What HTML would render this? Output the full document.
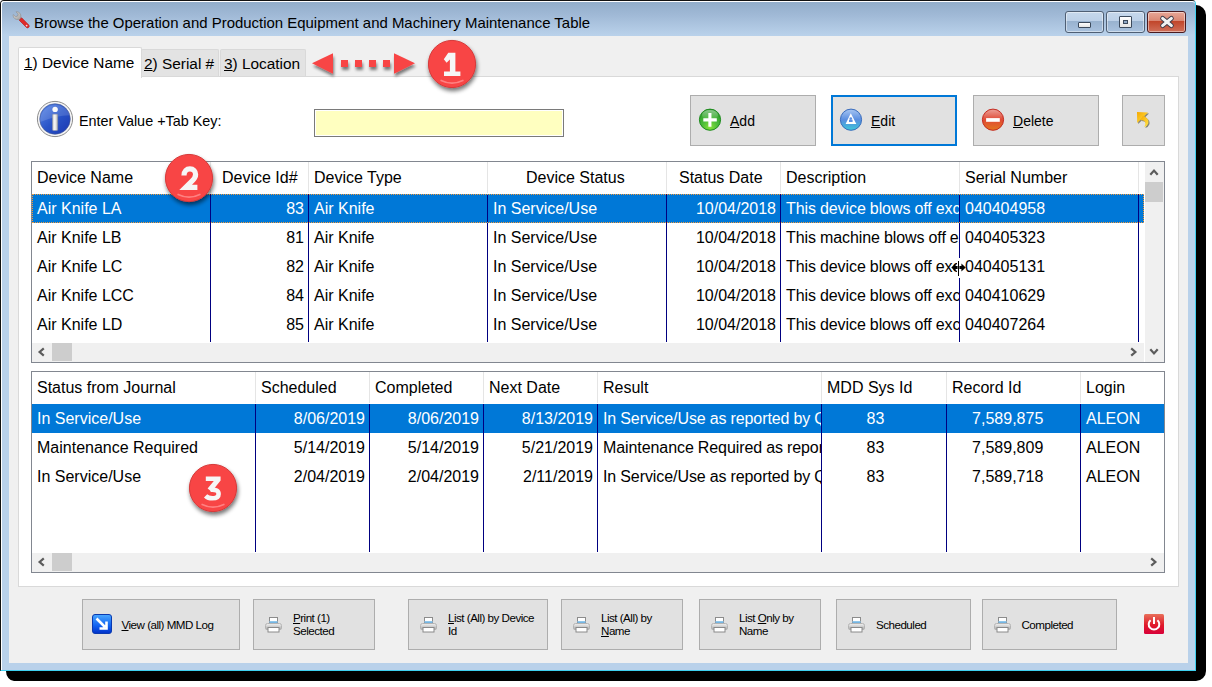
<!DOCTYPE html>
<html><head><meta charset="utf-8">
<style>
*{margin:0;padding:0;box-sizing:border-box}
html,body{width:1212px;height:687px;overflow:hidden;background:#fff;font-family:"Liberation Sans",sans-serif;color:#000}
.a{position:absolute}
.t{position:absolute;white-space:nowrap;line-height:1}
#shadowR{left:1190px;top:4px;width:16px;height:677px;background:#000;clip-path:polygon(0 0,6px 0,16px 10px,16px calc(100% - 10px),calc(100% - 10px) 100%,0 100%)}
#shadowB{left:6px;top:660px;width:1200px;height:21px;background:#000;clip-path:polygon(0 0,100% 0,100% calc(100% - 10px),calc(100% - 10px) 100%,8px 100%,0 calc(100% - 8px))}
#win{left:0;top:0;width:1196px;height:671px;background:linear-gradient(#93aecb 2px,#a0b9d6 14px,#b9d1ea 34px,#b9d1ea 100%);border-top:1px solid #111;border-left:1px solid #111;border-right:1px solid #3fd0f0;border-bottom:1px solid #3fd0f0;border-radius:4px 4px 0 0}
#winin{left:1px;top:1px;width:1194px;height:669px;border-top:1px solid #fff;border-left:1px solid #fff;border-radius:3px 3px 0 0}
.tb{height:22px;top:11px;border:1px solid #4f5f74;border-radius:3px;background:linear-gradient(#c6d8ec 0,#bcd0e7 45%,#98b2cf 46%,#a9c2de 100%);box-shadow:inset 0 0 0 1px rgba(255,255,255,.45)}
#bclose{background:linear-gradient(#e8a797 0,#d98672 45%,#c1452a 46%,#d0705a 100%);border-color:#4a1a1f}
#client{left:9px;top:36px;width:1179px;height:627px;background:#f0f0f0}
.tab{position:absolute;background:#e3e3e3;border:1px solid #d9d9d9;border-bottom:none;border-radius:2px 2px 0 0}
#panel{left:18px;top:76px;width:1161px;height:511px;background:#fff;border:1px solid #d9d9d9}
.btn{position:absolute;background:#e1e1e1;border:1px solid #adadad}
.grid{position:absolute;background:#fff;border:1px solid #828790}
.cell{position:absolute;overflow:hidden;white-space:nowrap;font-size:16px;line-height:29px;height:29px}
.hdr{position:absolute;overflow:hidden;white-space:nowrap;font-size:16px;line-height:32px;height:32px}
.vl{position:absolute;width:1px;background:#000080}
.hl{position:absolute;width:1px;background:#e5e5e5}
.sb{position:absolute;background:#f0f0f0}
.bb{position:absolute;background:#e1e1e1;border:1px solid #adadad;font-size:10.6px;line-height:13px}
.u{text-decoration:underline;text-underline-offset:1px}
</style></head><body>
<svg class="a" style="left:0;top:0" width="1212" height="687"><path d="M1180 5 H1196 A10 10 0 0 1 1206 15 V671 A10 10 0 0 1 1196 681 H14 A8 10 0 0 1 6 671 V650 H1180z" fill="#000"/></svg>
<div id="win" class="a"></div><div id="winin" class="a"></div>
<svg class="a" style="left:10px;top:11px" width="22" height="20" viewBox="0 0 22 20">
<defs><linearGradient id="wh" x1="0" y1="0" x2="1" y2="1"><stop offset="0" stop-color="#e0e0e0"/><stop offset="1" stop-color="#9a9a9a"/></linearGradient></defs>
<path d="M3.2 3.6 a4.2 4.2 0 0 0 5.6 4.6 l1.2 1.2 1.8-1.8 -1.2-1.2 a4.2 4.2 0 0 0 -4.6-5.6 l2.2 2.2 -0.6 2 -2 0.6z" fill="url(#wh)" stroke="#8a8a8a" stroke-width=".6"/>
<path d="M9.2 9.2 l2.4-2.4 7.2 7.2 a1.7 1.7 0 0 1 -2.4 2.4z" fill="#e02a2a" stroke="#b01818" stroke-width=".6"/>
<circle cx="16.6" cy="14.6" r=".9" fill="#fff" opacity=".8"/>
</svg>
<div class="t" style="left:34px;top:16px;font-size:14.95px">Browse the Operation and Production Equipment and Machinery Maintenance Table</div>
<div class="a tb" style="left:1065px;width:39px"></div>
<div class="a tb" style="left:1106px;width:39px"></div>
<div id="bclose" class="a tb" style="left:1147px;width:39px"></div>
<div class="a" style="left:1078px;top:22px;width:13px;height:6px;background:linear-gradient(#fff,#e4e4e4);border:1px solid #3c4a5c;border-radius:1px"></div>
<div class="a" style="left:1119px;top:16px;width:13px;height:12px;background:linear-gradient(#fff,#e4e4e4);border:1px solid #3c4a5c;border-radius:1px"><div class="a" style="left:3px;top:3px;width:5px;height:4px;background:#8fa8c6;border:1px solid #3c4a5c"></div></div>
<svg class="a" style="left:1158px;top:14px" width="18" height="16" viewBox="0 0 18 16">
<path d="M4.6 4.4 L13.4 11.6 M13.4 4.4 L4.6 11.6" stroke="#3a3a48" stroke-width="4.8" stroke-linecap="round"/>
<path d="M4.6 4.4 L13.4 11.6 M13.4 4.4 L4.6 11.6" stroke="#f2f2f2" stroke-width="3" stroke-linecap="round"/>
</svg>
<div id="client" class="a"></div>
<div class="tab" style="left:141px;top:49px;width:78px;height:28px"></div>
<div class="tab" style="left:220px;top:49px;width:86px;height:28px"></div>
<div id="panel" class="a"></div>
<div class="tab" style="left:18px;top:47px;width:124px;height:31px;background:#fff"></div>
<div class="t" style="left:24px;top:55px;font-size:15.4px"><span class="u">1</span>) Device Name</div>
<div class="t" style="left:144px;top:56px;font-size:15.4px"><span class="u">2</span>) Serial #</div>
<div class="t" style="left:224px;top:56px;font-size:15.4px"><span class="u">3</span>) Location</div>
<svg class="a" style="left:36px;top:100px" width="38" height="38" viewBox="0 0 38 38">
<defs>
<linearGradient id="ib" x1="0" y1="0" x2="1" y2="1"><stop offset="0" stop-color="#5a88e8"/><stop offset=".5" stop-color="#2a55c8"/><stop offset="1" stop-color="#1a36b0"/></linearGradient>
<linearGradient id="ii" x1="0" y1="0" x2="1" y2="0"><stop offset="0" stop-color="#c8c8c8"/><stop offset=".45" stop-color="#fafafa"/><stop offset="1" stop-color="#b0b0b0"/></linearGradient>
</defs>
<circle cx="19" cy="19" r="17.6" fill="#f6f6f6" stroke="#8c8c8c" stroke-width="1"/>
<circle cx="19" cy="19" r="15.3" fill="url(#ib)" stroke="#4a5a90" stroke-width=".6"/>
<path d="M4.2 22 A15.3 15.3 0 0 1 33.8 15.2 Q20 15.5 4.2 22z" fill="#fff" opacity=".14"/>
<circle cx="19.1" cy="9.4" r="2.7" fill="#fafafa"/>
<rect x="16.5" y="14.2" width="5.2" height="16.3" rx=".8" fill="url(#ii)" stroke="#9a9a9a" stroke-width=".4"/>
</svg>
<div class="t" style="left:79px;top:114px;font-size:14.4px">Enter Value +Tab Key:</div>
<div class="a" style="left:314px;top:109px;width:250px;height:28px;border:1px solid #7a7a7a;background:#ffffc0;box-shadow:inset 0 0 0 1px #fff"></div>
<div class="btn" style="left:690px;top:95px;width:126px;height:51px"></div>
<div class="btn" style="left:831px;top:95px;width:126px;height:51px;border:2px solid #0078d7"></div>
<div class="btn" style="left:973px;top:95px;width:126px;height:51px"></div>
<div class="btn" style="left:1122px;top:95px;width:43px;height:51px"></div>
<div class="t" style="left:730px;top:113.5px;font-size:14px"><span class="u">A</span>dd</div>
<div class="t" style="left:871px;top:113.5px;font-size:14px"><span class="u">E</span>dit</div>
<div class="t" style="left:1013px;top:113.5px;font-size:14px"><span class="u">D</span>elete</div>
<svg class="a" style="left:698px;top:108px" width="24" height="24" viewBox="0 0 24 24">
<defs><radialGradient id="ga" cx=".5" cy=".85" r=".8"><stop offset="0" stop-color="#86e23a"/><stop offset=".45" stop-color="#4cbc3a"/><stop offset="1" stop-color="#2a9a2a"/></radialGradient>
<linearGradient id="gah" x1="0" y1="0" x2="0" y2="1"><stop offset="0" stop-color="#fff" stop-opacity=".45"/><stop offset="1" stop-color="#fff" stop-opacity="0"/></linearGradient></defs>
<circle cx="12" cy="11.7" r="10.6" fill="url(#ga)" stroke="#1f8c1f" stroke-width="1"/>
<ellipse cx="12" cy="7" rx="8" ry="5" fill="url(#gah)"/>
<path d="M11.9 5 V18.8 M5.3 11.85 H18.8" stroke="#fff" stroke-width="3.1"/>
</svg>
<svg class="a" style="left:839px;top:108px" width="24" height="24" viewBox="0 0 24 24">
<defs><linearGradient id="ge" x1="0" y1="0" x2="0" y2="1"><stop offset="0" stop-color="#a8c6f2"/><stop offset=".5" stop-color="#5a8ee0"/><stop offset=".75" stop-color="#48a8dc"/><stop offset="1" stop-color="#40c8d8"/></linearGradient></defs>
<circle cx="12" cy="11.7" r="10.6" fill="url(#ge)" stroke="#3a6cbc" stroke-width="1"/>
<path d="M11.8 5.3 L17.3 16 H6.6z" fill="#fff"/>
<circle cx="11.8" cy="10.6" r="1.3" fill="#5a8ee0"/><rect x="10" y="11.6" width="3.6" height="2.4" fill="#5a8ee0"/>
</svg>
<svg class="a" style="left:981px;top:108px" width="24" height="24" viewBox="0 0 24 24">
<defs><linearGradient id="gd" x1="0" y1="0" x2="0" y2="1"><stop offset="0" stop-color="#eba098"/><stop offset=".5" stop-color="#e04a36"/><stop offset="1" stop-color="#e2761e"/></linearGradient></defs>
<circle cx="12" cy="11.7" r="10.6" fill="url(#gd)" stroke="#c42c22" stroke-width="1"/>
<rect x="5.1" y="10.1" width="13.7" height="3.7" fill="#fff"/>
</svg>
<svg class="a" style="left:1135px;top:110px" width="16" height="20" viewBox="0 0 16 20">
<defs><linearGradient id="yar" x1="0" y1="0" x2="1" y2="1"><stop offset="0" stop-color="#f6a800"/><stop offset="1" stop-color="#ffe64a"/></linearGradient></defs>
<g transform="translate(1,1)" fill="#3a3a20" opacity=".55"><path d="M2 2 L13 2.6 L2.2 13z"/><path d="M8 5.5 Q14.8 8.8 13.3 13.6 Q12.4 16.3 9.3 17 Q11.2 13.8 10 11.8 Q9 10.2 5.5 10z"/></g>
<g fill="url(#yar)"><path d="M2 2 L13 2.6 L2.2 13z"/><path d="M8 5.5 Q14.8 8.8 13.3 13.6 Q12.4 16.3 9.3 17 Q11.2 13.8 10 11.8 Q9 10.2 5.5 10z"/></g>
</svg>
<div class="grid" style="left:31px;top:161px;width:1134px;height:202px"></div>
<div class="hl" style="left:210px;top:162px;height:31px"></div>
<div class="hl" style="left:308px;top:162px;height:31px"></div>
<div class="hl" style="left:487px;top:162px;height:31px"></div>
<div class="hl" style="left:666px;top:162px;height:31px"></div>
<div class="hl" style="left:780px;top:162px;height:31px"></div>
<div class="hl" style="left:959px;top:162px;height:31px"></div>
<div class="hl" style="left:1138px;top:162px;height:31px"></div>
<div class="t" style="left:37px;top:170px;font-size:16px">Device Name</div>
<div class="t" style="left:222px;top:170px;font-size:16px">Device Id#</div>
<div class="t" style="left:314px;top:170px;font-size:16px">Device Type</div>
<div class="t" style="left:526px;top:170px;font-size:16px">Device Status</div>
<div class="t" style="left:679px;top:170px;font-size:16px">Status Date</div>
<div class="t" style="left:786px;top:170px;font-size:16px">Description</div>
<div class="t" style="left:965px;top:170px;font-size:16px">Serial Number</div>
<div class="a" style="left:32px;top:194px;width:1112px;height:148px;overflow:hidden">
<div class="a" style="left:0;top:0;width:1112px;height:29px;background:#0078d7"></div>
<div class="vl" style="left:178px;top:0;height:148px"></div>
<div class="vl" style="left:276px;top:0;height:148px"></div>
<div class="vl" style="left:455px;top:0;height:148px"></div>
<div class="vl" style="left:634px;top:0;height:148px"></div>
<div class="vl" style="left:748px;top:0;height:148px"></div>
<div class="vl" style="left:927px;top:0;height:148px"></div>
<div class="vl" style="left:1106px;top:0;height:148px"></div>
<div class="vl" style="left:1106px;top:0;height:148px"></div>
<div class="cell" style="left:0px;top:0px;width:178px;padding-left:5px;color:#fff">Air Knife LA</div>
<div class="cell" style="left:179px;top:0px;width:97px;padding-right:4px;text-align:right;color:#fff">83</div>
<div class="cell" style="left:277px;top:0px;width:178px;padding-left:5px;color:#fff">Air Knife</div>
<div class="cell" style="left:456px;top:0px;width:178px;padding-left:5px;color:#fff">In Service/Use</div>
<div class="cell" style="left:635px;top:0px;width:113px;padding-right:4px;text-align:right;color:#fff">10/04/2018</div>
<div class="cell" style="left:749px;top:0px;width:178px;padding-left:5px;letter-spacing:-0.08px;word-spacing:-0.3px;color:#fff">This device blows off excess</div>
<div class="cell" style="left:928px;top:0px;width:178px;padding-left:5px;color:#fff">040404958</div>
<div class="cell" style="left:0px;top:29px;width:178px;padding-left:5px;color:#000">Air Knife LB</div>
<div class="cell" style="left:179px;top:29px;width:97px;padding-right:4px;text-align:right;color:#000">81</div>
<div class="cell" style="left:277px;top:29px;width:178px;padding-left:5px;color:#000">Air Knife</div>
<div class="cell" style="left:456px;top:29px;width:178px;padding-left:5px;color:#000">In Service/Use</div>
<div class="cell" style="left:635px;top:29px;width:113px;padding-right:4px;text-align:right;color:#000">10/04/2018</div>
<div class="cell" style="left:749px;top:29px;width:178px;padding-left:5px;letter-spacing:-0.08px;word-spacing:-0.3px;color:#000">This machine blows off excess</div>
<div class="cell" style="left:928px;top:29px;width:178px;padding-left:5px;color:#000">040405323</div>
<div class="cell" style="left:0px;top:58px;width:178px;padding-left:5px;color:#000">Air Knife LC</div>
<div class="cell" style="left:179px;top:58px;width:97px;padding-right:4px;text-align:right;color:#000">82</div>
<div class="cell" style="left:277px;top:58px;width:178px;padding-left:5px;color:#000">Air Knife</div>
<div class="cell" style="left:456px;top:58px;width:178px;padding-left:5px;color:#000">In Service/Use</div>
<div class="cell" style="left:635px;top:58px;width:113px;padding-right:4px;text-align:right;color:#000">10/04/2018</div>
<div class="cell" style="left:749px;top:58px;width:178px;padding-left:5px;letter-spacing:-0.08px;word-spacing:-0.3px;color:#000">This device blows off excess</div>
<div class="cell" style="left:928px;top:58px;width:178px;padding-left:5px;color:#000">040405131</div>
<div class="cell" style="left:0px;top:87px;width:178px;padding-left:5px;color:#000">Air Knife LCC</div>
<div class="cell" style="left:179px;top:87px;width:97px;padding-right:4px;text-align:right;color:#000">84</div>
<div class="cell" style="left:277px;top:87px;width:178px;padding-left:5px;color:#000">Air Knife</div>
<div class="cell" style="left:456px;top:87px;width:178px;padding-left:5px;color:#000">In Service/Use</div>
<div class="cell" style="left:635px;top:87px;width:113px;padding-right:4px;text-align:right;color:#000">10/04/2018</div>
<div class="cell" style="left:749px;top:87px;width:178px;padding-left:5px;letter-spacing:-0.08px;word-spacing:-0.3px;color:#000">This device blows off excess</div>
<div class="cell" style="left:928px;top:87px;width:178px;padding-left:5px;color:#000">040410629</div>
<div class="cell" style="left:0px;top:116px;width:178px;padding-left:5px;color:#000">Air Knife LD</div>
<div class="cell" style="left:179px;top:116px;width:97px;padding-right:4px;text-align:right;color:#000">85</div>
<div class="cell" style="left:277px;top:116px;width:178px;padding-left:5px;color:#000">Air Knife</div>
<div class="cell" style="left:456px;top:116px;width:178px;padding-left:5px;color:#000">In Service/Use</div>
<div class="cell" style="left:635px;top:116px;width:113px;padding-right:4px;text-align:right;color:#000">10/04/2018</div>
<div class="cell" style="left:749px;top:116px;width:178px;padding-left:5px;letter-spacing:-0.08px;word-spacing:-0.3px;color:#000">This device blows off excess</div>
<div class="cell" style="left:928px;top:116px;width:178px;padding-left:5px;color:#000">040407264</div>
<div class="cell" style="left:0px;top:145px;width:178px;padding-left:5px;color:#000">Air Knife LE</div>
<div class="cell" style="left:179px;top:145px;width:97px;padding-right:4px;text-align:right;color:#000">86</div>
<div class="cell" style="left:277px;top:145px;width:178px;padding-left:5px;color:#000">Air Knife</div>
<div class="cell" style="left:456px;top:145px;width:178px;padding-left:5px;color:#000">In Service/Use</div>
<div class="cell" style="left:635px;top:145px;width:113px;padding-right:4px;text-align:right;color:#000">10/04/2018</div>
<div class="cell" style="left:749px;top:145px;width:178px;padding-left:5px;letter-spacing:-0.08px;word-spacing:-0.3px;color:#000">This device blows off excess</div>
<div class="cell" style="left:928px;top:145px;width:178px;padding-left:5px;color:#000">040407265</div>
<div class="a" style="left:0;top:0;width:1112px;height:29px;border:1px dotted #f39a3c"></div>
</div>
<div class="sb" style="left:1145px;top:162px;width:19px;height:200px"></div>
<div class="a" style="left:1145px;top:182px;width:18px;height:20px;background:#cdcdcd"></div>
<svg class="a" style="left:1147.5px;top:166px" width="12" height="12" viewBox="-6 -6 12 12"><path d="M-3.7 2.8 L0 -1.4 L3.7 2.8" fill="none" stroke="#5c5c5c" stroke-width="2.2" stroke-linejoin="miter" stroke-miterlimit="6"/></svg>
<svg class="a" style="left:1147.5px;top:345.5px" width="12" height="12" viewBox="-6 -6 12 12"><path d="M-3.7 -2.8 L0 1.4 L3.7 -2.8" fill="none" stroke="#5c5c5c" stroke-width="2.2" stroke-linejoin="miter" stroke-miterlimit="6"/></svg>
<div class="sb" style="left:32px;top:343px;width:1112px;height:19px"></div>
<div class="a" style="left:52px;top:343px;width:20px;height:18px;background:#cdcdcd"></div>
<svg class="a" style="left:35px;top:345.7px" width="12" height="12" viewBox="-6 -6 12 12"><path d="M2.8 -3.7 L-1.4 0 L2.8 3.7" fill="none" stroke="#5c5c5c" stroke-width="2.2" stroke-linejoin="miter" stroke-miterlimit="6"/></svg>
<svg class="a" style="left:1128px;top:345.5px" width="12" height="12" viewBox="-6 -6 12 12"><path d="M-2.8 -3.7 L1.4 0 L-2.8 3.7" fill="none" stroke="#5c5c5c" stroke-width="2.2" stroke-linejoin="miter" stroke-miterlimit="6"/></svg>
<div class="a" style="left:957px;top:258px;width:3px;height:20px;background:#fff"></div>
<svg class="a" style="left:950px;top:260px" width="18" height="17" viewBox="0 0 18 17"><rect x="8" y="1" width="1" height="15" fill="#000"/><path d="M1.3 7.5 L5.6 3.4 V6 H7.6 V9 H5.6 V11.6z M15.7 7.5 L11.4 3.4 V6 H9.4 V9 H11.4 V11.6z" fill="#000"/></svg>
<div class="grid" style="left:31px;top:371px;width:1134px;height:202px"></div>
<div class="hl" style="left:255px;top:372px;height:31px"></div>
<div class="hl" style="left:369px;top:372px;height:31px"></div>
<div class="hl" style="left:483px;top:372px;height:31px"></div>
<div class="hl" style="left:597px;top:372px;height:31px"></div>
<div class="hl" style="left:821px;top:372px;height:31px"></div>
<div class="hl" style="left:946px;top:372px;height:31px"></div>
<div class="hl" style="left:1080px;top:372px;height:31px"></div>
<div class="t" style="left:37px;top:380px;font-size:16px">Status from Journal</div>
<div class="t" style="left:261px;top:380px;font-size:16px">Scheduled</div>
<div class="t" style="left:375px;top:380px;font-size:16px">Completed</div>
<div class="t" style="left:489px;top:380px;font-size:16px">Next Date</div>
<div class="t" style="left:603px;top:380px;font-size:16px">Result</div>
<div class="t" style="left:827px;top:380px;font-size:16px">MDD Sys Id</div>
<div class="t" style="left:952px;top:380px;font-size:16px">Record Id</div>
<div class="t" style="left:1086px;top:380px;font-size:16px">Login</div>
<div class="a" style="left:32px;top:404px;width:1132px;height:148px;overflow:hidden">
<div class="a" style="left:0;top:0;width:1132px;height:29px;background:#0078d7"></div>
<div class="vl" style="left:223px;top:0;height:148px"></div>
<div class="vl" style="left:337px;top:0;height:148px"></div>
<div class="vl" style="left:451px;top:0;height:148px"></div>
<div class="vl" style="left:565px;top:0;height:148px"></div>
<div class="vl" style="left:789px;top:0;height:148px"></div>
<div class="vl" style="left:914px;top:0;height:148px"></div>
<div class="vl" style="left:1048px;top:0;height:148px"></div>
<div class="vl" style="left:1132px;top:0;height:148px"></div>
<div class="cell" style="left:0px;top:0px;width:223px;padding-left:5px;color:#fff">In Service/Use</div>
<div class="cell" style="left:224px;top:0px;width:113px;padding-right:4px;text-align:right;color:#fff">8/06/2019</div>
<div class="cell" style="left:338px;top:0px;width:113px;padding-right:4px;text-align:right;color:#fff">8/06/2019</div>
<div class="cell" style="left:452px;top:0px;width:113px;padding-right:4px;text-align:right;color:#fff">8/13/2019</div>
<div class="cell" style="left:566px;top:0px;width:223px;padding-left:5px;letter-spacing:-0.08px;word-spacing:-0.3px;color:#fff">In Service/Use as reported by QC</div>
<div class="cell" style="left:790px;top:0px;width:124px;text-align:center;padding-right:17px;color:#fff">83</div>
<div class="cell" style="left:915px;top:0px;width:133px;text-align:center;padding-right:11.6px;color:#fff">7,589,875</div>
<div class="cell" style="left:1049px;top:0px;width:83px;padding-left:5px;color:#fff">ALEON</div>
<div class="cell" style="left:0px;top:29px;width:223px;padding-left:5px;color:#000">Maintenance Required</div>
<div class="cell" style="left:224px;top:29px;width:113px;padding-right:4px;text-align:right;color:#000">5/14/2019</div>
<div class="cell" style="left:338px;top:29px;width:113px;padding-right:4px;text-align:right;color:#000">5/14/2019</div>
<div class="cell" style="left:452px;top:29px;width:113px;padding-right:4px;text-align:right;color:#000">5/21/2019</div>
<div class="cell" style="left:566px;top:29px;width:223px;padding-left:5px;letter-spacing:-0.08px;word-spacing:-0.3px;color:#000">Maintenance Required as reported</div>
<div class="cell" style="left:790px;top:29px;width:124px;text-align:center;padding-right:17px;color:#000">83</div>
<div class="cell" style="left:915px;top:29px;width:133px;text-align:center;padding-right:11.6px;color:#000">7,589,809</div>
<div class="cell" style="left:1049px;top:29px;width:83px;padding-left:5px;color:#000">ALEON</div>
<div class="cell" style="left:0px;top:58px;width:223px;padding-left:5px;color:#000">In Service/Use</div>
<div class="cell" style="left:224px;top:58px;width:113px;padding-right:4px;text-align:right;color:#000">2/04/2019</div>
<div class="cell" style="left:338px;top:58px;width:113px;padding-right:4px;text-align:right;color:#000">2/04/2019</div>
<div class="cell" style="left:452px;top:58px;width:113px;padding-right:4px;text-align:right;color:#000">2/11/2019</div>
<div class="cell" style="left:566px;top:58px;width:223px;padding-left:5px;letter-spacing:-0.08px;word-spacing:-0.3px;color:#000">In Service/Use as reported by QC</div>
<div class="cell" style="left:790px;top:58px;width:124px;text-align:center;padding-right:17px;color:#000">83</div>
<div class="cell" style="left:915px;top:58px;width:133px;text-align:center;padding-right:11.6px;color:#000">7,589,718</div>
<div class="cell" style="left:1049px;top:58px;width:83px;padding-left:5px;color:#000">ALEON</div>
</div>
<div class="sb" style="left:32px;top:553px;width:1132px;height:19px"></div>
<div class="a" style="left:52px;top:553px;width:20px;height:18px;background:#cdcdcd"></div>
<svg class="a" style="left:35px;top:556px" width="12" height="12" viewBox="-6 -6 12 12"><path d="M2.8 -3.7 L-1.4 0 L2.8 3.7" fill="none" stroke="#5c5c5c" stroke-width="2.2" stroke-linejoin="miter" stroke-miterlimit="6"/></svg>
<svg class="a" style="left:1148px;top:556px" width="12" height="12" viewBox="-6 -6 12 12"><path d="M-2.8 -3.7 L1.4 0 L-2.8 3.7" fill="none" stroke="#5c5c5c" stroke-width="2.2" stroke-linejoin="miter" stroke-miterlimit="6"/></svg>
<div class="bb" style="left:82px;top:599px;width:158px;height:51px"></div>
<div class="bb" style="left:253px;top:599px;width:122px;height:51px"></div>
<div class="bb" style="left:408px;top:599px;width:140px;height:51px"></div>
<div class="bb" style="left:561px;top:599px;width:122px;height:51px"></div>
<div class="bb" style="left:699px;top:599px;width:122px;height:51px"></div>
<div class="bb" style="left:836px;top:599px;width:135px;height:51px"></div>
<div class="bb" style="left:982px;top:599px;width:135px;height:51px"></div>
<svg class="a" style="left:92px;top:614px" width="20" height="20" viewBox="0 0 20 20">
<defs><linearGradient id="gb" x1="0" y1="0" x2="0" y2="1"><stop offset="0" stop-color="#4aa8ff"/><stop offset=".6" stop-color="#1060f0"/><stop offset="1" stop-color="#0030c8"/></linearGradient></defs>
<rect x=".5" y=".5" width="19" height="19" rx="2.5" fill="url(#gb)" stroke="#0a3ab0" stroke-width="1"/>
<path d="M4.5 4.5 L13 13 M14.5 7.5 V14.5 H7.5" fill="none" stroke="#fff" stroke-width="2.6"/>
</svg>
<svg class="a" style="left:265px;top:616px" width="17" height="17" viewBox="0 0 17 17">
<defs><linearGradient id="pb0" x1="0" y1="0" x2="0" y2="1"><stop offset="0" stop-color="#f4f4f4"/><stop offset="1" stop-color="#a9a9a9"/></linearGradient>
<linearGradient id="pc0" x1="0" y1="0" x2="0" y2="1"><stop offset="0" stop-color="#9fd0f0"/><stop offset="1" stop-color="#2f86c8"/></linearGradient></defs>
<rect x="4.5" y="1.5" width="8" height="5" fill="#fff" stroke="#8c8c8c" stroke-width="1"/>
<rect x="4.5" y="5" width="8" height="4" fill="url(#pc0)"/>
<path d="M0.5 9.5 Q0.5 7.5 2.5 7.5 H14.5 Q16.5 7.5 16.5 9.5 V12.5 Q16.5 13.5 15 13.5 H2 Q0.5 13.5 0.5 12.5z" fill="url(#pb0)" stroke="#b4b4b4" stroke-width="1"/>
<rect x="3" y="11.5" width="11" height="4.5" fill="#fff" stroke="#8a8a8a" stroke-width="1"/>
</svg>
<svg class="a" style="left:573px;top:616px" width="17" height="17" viewBox="0 0 17 17">
<defs><linearGradient id="pb1" x1="0" y1="0" x2="0" y2="1"><stop offset="0" stop-color="#f4f4f4"/><stop offset="1" stop-color="#a9a9a9"/></linearGradient>
<linearGradient id="pc1" x1="0" y1="0" x2="0" y2="1"><stop offset="0" stop-color="#9fd0f0"/><stop offset="1" stop-color="#2f86c8"/></linearGradient></defs>
<rect x="4.5" y="1.5" width="8" height="5" fill="#fff" stroke="#8c8c8c" stroke-width="1"/>
<rect x="4.5" y="5" width="8" height="4" fill="url(#pc1)"/>
<path d="M0.5 9.5 Q0.5 7.5 2.5 7.5 H14.5 Q16.5 7.5 16.5 9.5 V12.5 Q16.5 13.5 15 13.5 H2 Q0.5 13.5 0.5 12.5z" fill="url(#pb1)" stroke="#b4b4b4" stroke-width="1"/>
<rect x="3" y="11.5" width="11" height="4.5" fill="#fff" stroke="#8a8a8a" stroke-width="1"/>
</svg>
<svg class="a" style="left:711px;top:616px" width="17" height="17" viewBox="0 0 17 17">
<defs><linearGradient id="pb2" x1="0" y1="0" x2="0" y2="1"><stop offset="0" stop-color="#f4f4f4"/><stop offset="1" stop-color="#a9a9a9"/></linearGradient>
<linearGradient id="pc2" x1="0" y1="0" x2="0" y2="1"><stop offset="0" stop-color="#9fd0f0"/><stop offset="1" stop-color="#2f86c8"/></linearGradient></defs>
<rect x="4.5" y="1.5" width="8" height="5" fill="#fff" stroke="#8c8c8c" stroke-width="1"/>
<rect x="4.5" y="5" width="8" height="4" fill="url(#pc2)"/>
<path d="M0.5 9.5 Q0.5 7.5 2.5 7.5 H14.5 Q16.5 7.5 16.5 9.5 V12.5 Q16.5 13.5 15 13.5 H2 Q0.5 13.5 0.5 12.5z" fill="url(#pb2)" stroke="#b4b4b4" stroke-width="1"/>
<rect x="3" y="11.5" width="11" height="4.5" fill="#fff" stroke="#8a8a8a" stroke-width="1"/>
</svg>
<svg class="a" style="left:848px;top:616px" width="17" height="17" viewBox="0 0 17 17">
<defs><linearGradient id="pb3" x1="0" y1="0" x2="0" y2="1"><stop offset="0" stop-color="#f4f4f4"/><stop offset="1" stop-color="#a9a9a9"/></linearGradient>
<linearGradient id="pc3" x1="0" y1="0" x2="0" y2="1"><stop offset="0" stop-color="#9fd0f0"/><stop offset="1" stop-color="#2f86c8"/></linearGradient></defs>
<rect x="4.5" y="1.5" width="8" height="5" fill="#fff" stroke="#8c8c8c" stroke-width="1"/>
<rect x="4.5" y="5" width="8" height="4" fill="url(#pc3)"/>
<path d="M0.5 9.5 Q0.5 7.5 2.5 7.5 H14.5 Q16.5 7.5 16.5 9.5 V12.5 Q16.5 13.5 15 13.5 H2 Q0.5 13.5 0.5 12.5z" fill="url(#pb3)" stroke="#b4b4b4" stroke-width="1"/>
<rect x="3" y="11.5" width="11" height="4.5" fill="#fff" stroke="#8a8a8a" stroke-width="1"/>
</svg>
<svg class="a" style="left:994px;top:616px" width="17" height="17" viewBox="0 0 17 17">
<defs><linearGradient id="pb4" x1="0" y1="0" x2="0" y2="1"><stop offset="0" stop-color="#f4f4f4"/><stop offset="1" stop-color="#a9a9a9"/></linearGradient>
<linearGradient id="pc4" x1="0" y1="0" x2="0" y2="1"><stop offset="0" stop-color="#9fd0f0"/><stop offset="1" stop-color="#2f86c8"/></linearGradient></defs>
<rect x="4.5" y="1.5" width="8" height="5" fill="#fff" stroke="#8c8c8c" stroke-width="1"/>
<rect x="4.5" y="5" width="8" height="4" fill="url(#pc4)"/>
<path d="M0.5 9.5 Q0.5 7.5 2.5 7.5 H14.5 Q16.5 7.5 16.5 9.5 V12.5 Q16.5 13.5 15 13.5 H2 Q0.5 13.5 0.5 12.5z" fill="url(#pb4)" stroke="#b4b4b4" stroke-width="1"/>
<rect x="3" y="11.5" width="11" height="4.5" fill="#fff" stroke="#8a8a8a" stroke-width="1"/>
</svg>
<svg class="a" style="left:420px;top:616px" width="17" height="17" viewBox="0 0 17 17">
<defs><linearGradient id="pb5" x1="0" y1="0" x2="0" y2="1"><stop offset="0" stop-color="#f4f4f4"/><stop offset="1" stop-color="#a9a9a9"/></linearGradient>
<linearGradient id="pc5" x1="0" y1="0" x2="0" y2="1"><stop offset="0" stop-color="#9fd0f0"/><stop offset="1" stop-color="#2f86c8"/></linearGradient></defs>
<rect x="4.5" y="1.5" width="8" height="5" fill="#fff" stroke="#8c8c8c" stroke-width="1"/>
<rect x="4.5" y="5" width="8" height="4" fill="url(#pc5)"/>
<path d="M0.5 9.5 Q0.5 7.5 2.5 7.5 H14.5 Q16.5 7.5 16.5 9.5 V12.5 Q16.5 13.5 15 13.5 H2 Q0.5 13.5 0.5 12.5z" fill="url(#pb5)" stroke="#b4b4b4" stroke-width="1"/>
<rect x="3" y="11.5" width="11" height="4.5" fill="#fff" stroke="#8a8a8a" stroke-width="1"/>
</svg>
<div class="t" style="left:121.5px;top:619px;font-size:11.6px;letter-spacing:-0.5px"><span class="u">V</span>iew (all) MMD Log</div>
<div class="t" style="left:293px;top:611px;font-size:11.6px;line-height:13px;letter-spacing:-0.5px"><span class="u">P</span>rint (1)<br>Selected</div>
<div class="t" style="left:448px;top:611px;font-size:11.6px;line-height:13px;letter-spacing:-0.5px"><span class="u">L</span>ist (All) by Device<br>Id</div>
<div class="t" style="left:601px;top:611px;font-size:11.6px;line-height:13px;letter-spacing:-0.5px">List (All) by<br><span class="u">N</span>ame</div>
<div class="t" style="left:739px;top:611px;font-size:11.6px;line-height:13px;letter-spacing:-0.5px">List <span class="u">O</span>nly by<br>Name</div>
<div class="t" style="left:876px;top:619px;font-size:11.6px;letter-spacing:-0.5px">Scheduled</div>
<div class="t" style="left:1021.5px;top:619px;font-size:11.6px;letter-spacing:-0.5px">Completed</div>
<svg class="a" style="left:1144px;top:614px" width="20" height="20" viewBox="0 0 20 20">
<defs><linearGradient id="gp" x1="0" y1="0" x2="0" y2="1"><stop offset="0" stop-color="#e8705a"/><stop offset=".55" stop-color="#e01a2a"/><stop offset="1" stop-color="#d8003a"/></linearGradient></defs>
<rect x="0" y="0" width="20" height="20" rx="1.5" fill="url(#gp)"/>
<path d="M6.6 6.2 A5.3 5.3 0 1 0 13.4 6.2" fill="none" stroke="#fff" stroke-width="2"/>
<rect x="9" y="3" width="2" height="7" fill="#fff"/>
</svg>
<svg class="a" style="left:422px;top:33.5px" width="64" height="66" viewBox="0 0 64 66">
<defs><filter id="sh1" x="-30%" y="-30%" width="160%" height="170%"><feGaussianBlur in="SourceAlpha" stdDeviation="2.2"/><feOffset dx="1" dy="3" result="o"/><feComponentTransfer><feFuncA type="linear" slope=".55"/></feComponentTransfer><feMerge><feMergeNode/><feMergeNode in="SourceGraphic"/></feMerge></filter></defs>
<g filter="url(#sh1)">
<circle cx="30" cy="30" r="23.6" fill="#f84545" stroke="#d53a3a" stroke-width="1"/>
</g>
<path d="M18.5 46.3 Q30 52 41.5 46.3" fill="none" stroke="#ff9090" stroke-width="1.6" opacity=".8"/>
<path d="M26.3 18.8 H33.4 V37.4 H38.4 V42 H22 V37.4 H27.9 V25.6 L24.6 28.8 L21.8 25.2z" fill="#f6f6f6"/>
</svg>
<svg class="a" style="left:159px;top:147.7px" width="64" height="66" viewBox="0 0 64 66">
<defs><filter id="sh2" x="-30%" y="-30%" width="160%" height="170%"><feGaussianBlur in="SourceAlpha" stdDeviation="2.2"/><feOffset dx="1" dy="3" result="o"/><feComponentTransfer><feFuncA type="linear" slope=".55"/></feComponentTransfer><feMerge><feMergeNode/><feMergeNode in="SourceGraphic"/></feMerge></filter></defs>
<g filter="url(#sh2)">
<circle cx="30" cy="30" r="23.6" fill="#f84545" stroke="#d53a3a" stroke-width="1"/>
</g>
<path d="M18.5 46.3 Q30 52 41.5 46.3" fill="none" stroke="#ff9090" stroke-width="1.6" opacity=".8"/>
<path d="M25 27.4 C25 23.1 27.6 20.9 30.9 20.9 C34.5 20.9 36.6 23.2 36.6 26.5 C36.6 29.2 35.2 30.9 33.2 32.8 L26.6 39.3 H38.4" fill="none" stroke="#f6f6f6" stroke-width="5.2"/>
</svg>
<svg class="a" style="left:183px;top:457.5px" width="64" height="66" viewBox="0 0 64 66">
<defs><filter id="sh3" x="-30%" y="-30%" width="160%" height="170%"><feGaussianBlur in="SourceAlpha" stdDeviation="2.2"/><feOffset dx="1" dy="3" result="o"/><feComponentTransfer><feFuncA type="linear" slope=".55"/></feComponentTransfer><feMerge><feMergeNode/><feMergeNode in="SourceGraphic"/></feMerge></filter></defs>
<g filter="url(#sh3)">
<circle cx="30" cy="30" r="23.6" fill="#f84545" stroke="#d53a3a" stroke-width="1"/>
</g>
<path d="M18.5 46.3 Q30 52 41.5 46.3" fill="none" stroke="#ff9090" stroke-width="1.6" opacity=".8"/>
<path d="M22.8 18.4 H37.6 V22.6 L32 29.6 L29 34 L24.6 30.4 L30.8 23 H22.8z" fill="#f6f6f6"/><path d="M27.4 31.8 C33 31.2 35.6 33 35.6 36 C35.6 39 33 40.3 29.3 40.3 C26.4 40.3 24.2 39.4 22.6 37.8" fill="none" stroke="#f6f6f6" stroke-width="4.6"/>
</svg>
<svg class="a" style="left:305px;top:48px" width="120" height="34" viewBox="0 0 120 34">
<defs><filter id="sha" x="-10%" y="-30%" width="120%" height="170%"><feGaussianBlur in="SourceAlpha" stdDeviation="1.6"/><feOffset dx="1" dy="3" result="o"/><feComponentTransfer><feFuncA type="linear" slope=".5"/></feComponentTransfer><feMerge><feMergeNode/><feMergeNode in="SourceGraphic"/></feMerge></filter></defs>
<g filter="url(#sha)" fill="#f84545">
<path d="M7 15.3 L28 5.3 V25.7z"/>
<rect x="36" y="12" width="7" height="7"/><rect x="50" y="12" width="7" height="7"/><rect x="64" y="12" width="7" height="7"/><rect x="78" y="12" width="7" height="7"/>
<path d="M110 15.3 L89 5.3 V25.7z"/>
</g></svg>
</body></html>
